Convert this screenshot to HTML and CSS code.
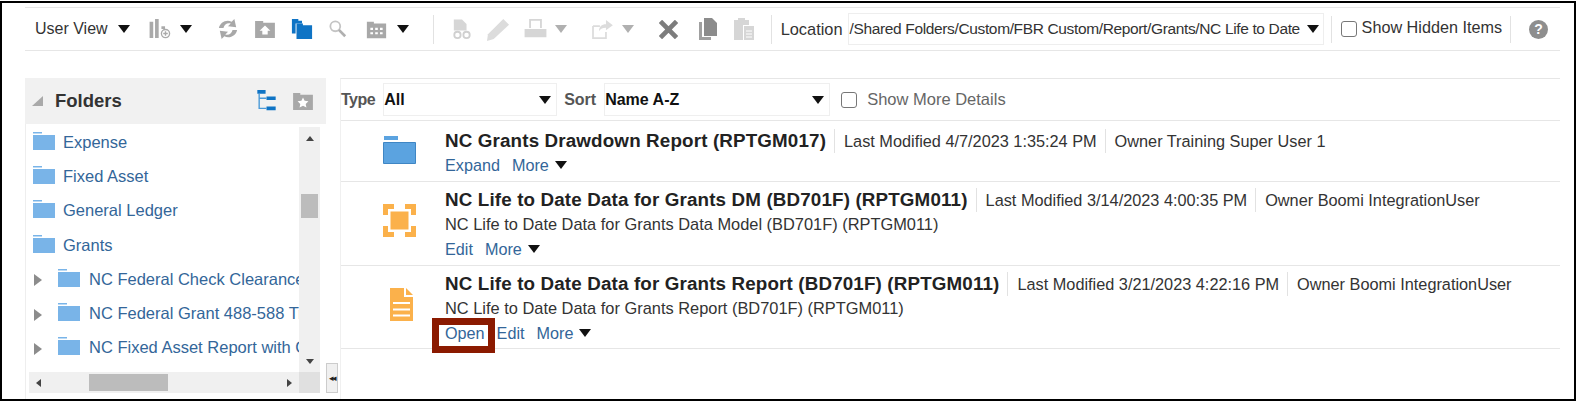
FILE: index.html
```html
<!DOCTYPE html>
<html lang="en">
<head>
<meta charset="utf-8">
<title>Catalog</title>
<link rel="stylesheet" href="styles.css">
</head>
<body>
<div class="frame">
  <div class="toolbar">
    <span class="tb-label">User View</span><span class="caret c-view"></span>
    <svg class="ic i-cols" viewBox="0 0 24 22"><path fill="#aaa" d="M0 3h4v18H0zM6 0h4v21H6z"/><path fill="#aaa" d="M13 8h4v3h-4z"/><circle cx="17.500" cy="16" r="4.500" fill="none" stroke="#aaa" stroke-width="1.500"/><path stroke="#aaa" stroke-width="1.500" d="M15 16h5M17.500 13.500v5"/></svg><span class="caret c-cols"></span>
    <svg class="ic i-refresh" viewBox="0 0 24 22"><path fill="#a8a8a8" d="M2 10C3 4 10 0 16 3l3-3 2 9-9-1 3-3c-4-1-7 1-8 5zM22 12c-1 6-8 10-14 7l-3 3-2-9 9 1-3 3c4 1 7-1 8-5z"/></svg>
    <svg class="ic i-up" viewBox="0 0 24 20"><path fill="#a8a8a8" d="M1 3V1h9v2h13v17H1z"/><path fill="#fff" d="M12 6l6 6h-3v4H9v-4H6z"/></svg>
    <svg class="ic i-folders" viewBox="0 0 24 22"><path fill="#0f74c5" d="M1 0h7v2h4v3H5v11H1z"/><path fill="#0f74c5" d="M6 5h7v2h10v15H6z"/></svg>
    <svg class="ic i-search" viewBox="0 0 20 20"><circle cx="7" cy="7" r="5.500" fill="none" stroke="#c4c4c4" stroke-width="2"/><path stroke="#b0b0b0" stroke-width="3" d="M11 11l7 7"/></svg>
    <svg class="ic i-grid" viewBox="0 0 24 20"><path fill="#a8a8a8" d="M1 3V1h8v2h14v17H1z"/><path fill="#fff" d="M5 8h3v2.500H5zM10.500 8h3v2.500h-3zM16 8h3v2.500h-3zM5 13h3v2.500H5zM10.500 13h3v2.500h-3zM16 13h3v2.500h-3z"/></svg><span class="caret c-grid"></span>
    <span class="sep s-one"></span>
    <svg class="ic i-doc" viewBox="0 0 22 22"><path fill="#d6d6d6" d="M2 0h9l5 5v7H2z"/><circle cx="6" cy="17" r="3.500" fill="none" stroke="#d0d0d0" stroke-width="2"/><circle cx="16" cy="17" r="3.500" fill="none" stroke="#d0d0d0" stroke-width="2"/></svg>
    <svg class="ic i-pen" viewBox="0 0 24 24"><path fill="#dcdcdc" d="M17 1l6 6L7 22l-7 2 1-7z"/></svg>
    <svg class="ic i-print" viewBox="0 0 24 22"><path fill="#d6d6d6" d="M5 0h14v10h-2V2H7v8H5zM0 11h24v9H0z"/></svg><span class="caret caret-off c-print"></span>
    <svg class="ic i-share" viewBox="0 0 24 22"><path fill="none" stroke="#dcdcdc" stroke-width="2" d="M1 7h8M1 7v14h15v-7"/><path fill="#dcdcdc" d="M16 0l8 6-8 6V9c-4 0-6 1-8 4 0-5 3-8 8-8z"/></svg><span class="caret caret-off c-share"></span>
    <svg class="ic i-x" viewBox="0 0 20 20"><path stroke="#7d7d7d" stroke-width="5" d="M1.500 1.500l17 17M18.500 1.500l-17 17"/></svg>
    <svg class="ic i-copy" viewBox="0 0 18 22"><path fill="#a0a0a0" d="M0 4h3v15h9v3H0z"/><path fill="#8c8c8c" d="M5 0h8l5 5v13H5z"/></svg>
    <svg class="ic i-paste" viewBox="0 0 20 22"><path fill="#d6d6d6" d="M0 2h4V0h7v2h4v5H9v15H0z"/><path fill="#d6d6d6" d="M10 8h10v14H10z"/><path stroke="#fff" d="M12 13h6M12 16h6M12 19h6"/></svg>
    <span class="sep s-two"></span>
    <span class="tb-label l-loc">Location</span>
    <div class="loc"><span class="loc-text">/Shared Folders/Custom/FBR Custom/Report/Grants/NC Life to Date</span><span class="caret c-loc"></span></div>
    <span class="sep s-three"></span>
    <span class="check c-hidden"></span><span class="tb-label l-hidden">Show Hidden Items</span>
    <span class="sep s-four"></span>
    <span class="help">?</span>
  </div>

  <div class="main">
    <aside class="side">
      <div class="side-head">
        <span class="tri-corner"></span>
        <span class="side-title">Folders</span>
        <svg class="ic i-tree" viewBox="0 0 20 24"><path fill="#0f74c5" d="M0 0h9v4H0zM10 7h10v4H10zM10 18h10v4H10z"/><path fill="none" stroke="#4a9ad8" stroke-width="1.500" d="M2 4v16h8M2 9h8"/></svg>
        <svg class="ic i-fav" viewBox="0 0 24 20"><path fill="#a8a8a8" d="M1 3V1h8v2h14v17H1z"/><path fill="#fff" d="M12 6l1.800 3.800 4.200.5-3 2.900.8 4.100-3.800-2-3.800 2 .8-4.100-3-2.900 4.200-.5z"/></svg>
      </div>
      <div class="tree-wrap">
        <div class="tree-view">
          <div class="tree">
            <div class="node"><svg class="fold" viewBox="0 0 22 18"><use href="#folder"/></svg><a>Expense</a></div>
            <div class="node"><svg class="fold" viewBox="0 0 22 18"><use href="#folder"/></svg><a>Fixed Asset</a></div>
            <div class="node"><svg class="fold" viewBox="0 0 22 18"><use href="#folder"/></svg><a>General Ledger</a></div>
            <div class="node"><svg class="fold" viewBox="0 0 22 18"><use href="#folder"/></svg><a>Grants</a></div>
            <div class="node sub"><span class="tri"></span><svg class="fold" viewBox="0 0 22 18"><use href="#folder"/></svg><a>NC Federal Check Clearance</a></div>
            <div class="node sub"><span class="tri"></span><svg class="fold" viewBox="0 0 22 18"><use href="#folder"/></svg><a>NC Federal Grant 488-588 Tr</a></div>
            <div class="node sub"><span class="tri"></span><svg class="fold" viewBox="0 0 22 18"><use href="#folder"/></svg><a>NC Fixed Asset Report with G</a></div>
            <div class="node sub"><span class="tri"></span><svg class="fold" viewBox="0 0 22 18"><use href="#folder"/></svg></div>
          </div>
          <div class="vbar"><span class="arr-up"></span><span class="vthumb"></span><span class="arr-down"></span></div>
        </div>
        <div class="hrow">
          <div class="hbar"><span class="arr-left"></span><span class="hthumb"></span><span class="arr-right"></span></div>
          <span class="corner"></span>
        </div>
      </div>
    </aside>
    <div class="splitter"><span class="grip">◂◂</span></div>
    <section class="content">
      <div class="filters">
        <span class="f-label l-type">Type</span>
        <div class="select s-type"><b>All</b><span class="caret"></span></div>
        <span class="f-label l-sort">Sort</span>
        <div class="select s-sort"><b>Name A-Z</b><span class="caret"></span></div>
        <span class="check c-more"></span><span class="more-label">Show More Details</span>
      </div>
      <div class="row r-one">
        <div class="r-icon"><svg class="big b-folder" viewBox="0 0 33 28"><path fill="#5ba3e0" d="M1 0h14v4H1z"/><path fill="#5ba3e0" stroke="#3f86c4" d="M.5 6.500h32v21H.5z"/></svg></div>
        <div class="r-body">
          <div class="r-top"><span class="r-title">NC Grants Drawdown Report (RPTGM017)</span><span class="meta first">Last Modified 4/7/2023 1:35:24 PM</span><span class="meta">Owner Training Super User 1</span></div>
          <div class="links"><a>Expand</a><a class="l-more">More</a><span class="caret"></span></div>
        </div>
      </div>
      <div class="row r-two">
        <div class="r-icon"><svg class="big" viewBox="0 0 33 33"><path fill="#fbb14b" d="M0 0h11v5H5v6H0zM22 0h11v11h-5V5h-6zM0 22h5v6h6v5H0zM28 22h5v11H22v-5h6z"/><path fill="#fbb14b" d="M7.500 7.500h18v18h-18z"/></svg></div>
        <div class="r-body">
          <div class="r-top"><span class="r-title">NC Life to Date Data for Grants DM (BD701F) (RPTGM011)</span><span class="meta first">Last Modified 3/14/2023 4:00:35 PM</span><span class="meta">Owner Boomi IntegrationUser</span></div>
          <div class="r-desc">NC Life to Date Data for Grants Data Model (BD701F) (RPTGM011)</div>
          <div class="links"><a>Edit</a><a class="l-more">More</a><span class="caret"></span></div>
        </div>
      </div>
      <div class="row r-three">
        <div class="r-icon"><svg class="doc" viewBox="0 0 23 33"><path fill="#fbb14b" d="M0 0h14v9h9v24H0z"/><path fill="#fbb14b" d="M16 0l7 7h-7z"/><path stroke="#fff" stroke-width="2.200" d="M3 15h17M3 21.500h17M3 27.500h17"/></svg></div>
        <div class="r-body">
          <div class="r-top"><span class="r-title">NC Life to Date Data for Grants Report (BD701F) (RPTGM011)</span><span class="meta first">Last Modified 3/21/2023 4:22:16 PM</span><span class="meta">Owner Boomi IntegrationUser</span></div>
          <div class="r-desc">NC Life to Date Data for Grants Report (BD701F) (RPTGM011)</div>
          <div class="links"><a class="open">Open<span class="mark"></span></a><a class="l-edit">Edit</a><a class="l-more">More</a><span class="caret"></span></div>
        </div>
      </div>
    </section>
  </div>
</div>
<svg class="defs" width="0" height="0"><defs><g id="folder"><path fill="#79b4e8" d="M0 0h9v1.500H0z"/><path fill="#79b4e8" d="M0 3h22v15H0z"/></g></defs></svg>
</body>
</html>
```
FILE: styles.css
```css
* { box-sizing: border-box; }
html, body { margin: 0; padding: 0; background: #fff; }
body { width: 1578px; height: 403px; overflow: hidden; font-family: "Liberation Sans", Arial, sans-serif; color: #333; }
.defs { display: block; height: 0; }
.frame { width: 1576px; height: 400px; margin-top: 1px; border: 2px solid #000; padding: 4px 14px 0 23px; overflow: hidden; }
.ic { display: block; flex: none; }

.toolbar { display: flex; align-items: center; height: 44px; border-top: 1px solid #e6e6e6; border-bottom: 1px solid #e6e6e6; padding-left: 10px; }
.tb-label { font-size: 16px; color: #333; white-space: nowrap; }
.caret { display: inline-block; flex: none; width: 0; height: 0; border-left: 6px solid transparent; border-right: 6px solid transparent; border-top: 8px solid #111; }
.caret-off { border-top-color: #b0b0b0; }
.c-view { margin-left: 10px; }
.i-cols { width: 23px; height: 20px; margin-left: 19px; }
.c-cols { margin-left: 8px; }
.i-refresh { width: 22px; height: 20px; margin-left: 25px; }
.i-up { width: 22px; height: 18px; margin-left: 15px; }
.i-folders { width: 22px; height: 22px; margin-left: 15px; }
.i-search { width: 18px; height: 18px; margin-left: 16px; }
.i-grid { width: 21px; height: 19px; margin-left: 19px; }
.c-grid { margin-left: 10px; }
.sep { display: block; flex: none; width: 1px; height: 29px; background: #e2e2e2; }
.s-one { margin-left: 24px; }
.i-doc { width: 20px; height: 21px; margin-left: 18px; }
.i-pen { width: 23px; height: 23px; margin-left: 15px; }
.i-print { width: 23px; height: 20px; margin-left: 14px; }
.c-print { margin-left: 8px; }
.i-share { width: 21px; height: 19px; margin-left: 25px; }
.c-share { margin-left: 9px; }
.i-x { width: 19px; height: 19px; margin-left: 25px; }
.i-copy { width: 18px; height: 22px; margin-left: 21px; }
.i-paste { width: 20px; height: 22px; margin-left: 17px; }
.s-two { margin-left: 17px; }
.l-loc { margin-left: 9px; font-size: 16.400px; }
.loc { display: flex; align-items: center; justify-content: space-between; width: 476px; height: 32px; margin-left: 5px; padding: 0 4px 0 1px; border: 1px solid #eee; }
.loc-text { font-size: 15.500px; color: #333; white-space: nowrap; letter-spacing: -.36px; }
.s-three { margin-left: 7px; height: 27px; }
.check { display: block; flex: none; width: 16px; height: 16px; border: 1.500px solid #777; border-radius: 3px; background: #fff; }
.c-hidden { margin-left: 9px; }
.l-hidden { margin-left: 5px; font-size: 16.200px; position: relative; top: -2px; }
.s-four { margin-left: 8px; height: 27px; }
.help { display: flex; align-items: center; justify-content: center; flex: none; width: 19px; height: 19px; margin-left: 18px; border-radius: 50%; background: #8e8e8e; color: #fff; font-size: 14px; font-weight: bold; }

.main { display: flex; margin-top: 27px; height: 322px; }
.side { width: 301px; flex: none; }
.side-head { display: flex; align-items: center; height: 46px; background: #f1f1f1; }
.tri-corner { width: 0; height: 0; margin-left: 7px; border-bottom: 10px solid #a9a9a9; border-left: 11px solid transparent; }
.side-title { margin-left: 12px; font-size: 18.500px; font-weight: bold; color: #333; }
.i-tree { width: 19px; height: 22px; margin-left: 135px; }
.i-fav { width: 22px; height: 18px; margin-left: 16px; }
.tree-wrap { height: 276px; padding: 3px 6px 0 3px; border-left: 1px solid #eee; }
.tree-view { display: flex; height: 245px; }
.tree { width: 270px; flex: none; overflow: hidden; padding-left: 4px; }
.node { display: flex; align-items: center; height: 34.300px; white-space: nowrap; }
.node:first-child { margin-top: -2px; }
.node a { font-size: 16.500px; color: #336699; margin-left: 8px; }
.fold { display: block; flex: none; width: 22px; height: 18px; margin-bottom: 3px; }
.sub .tri { flex: none; width: 0; height: 0; margin: 2px 0 0 1px; border-left: 8px solid #8c8c8c; border-top: 6.500px solid transparent; border-bottom: 6.500px solid transparent; }
.sub .fold { margin-left: 16px; }
.sub a { margin-left: 9px; }
.vbar { position: relative; width: 21px; flex: none; background: #f0f0f0; display: flex; flex-direction: column; align-items: center; justify-content: space-between; padding: 9px 0 8px; }
.vthumb { position: absolute; top: 67px; left: 2px; width: 17px; height: 24px; background: #bcbcbc; }
.arr-up { width: 0; height: 0; border-left: 4.500px solid transparent; border-right: 4.500px solid transparent; border-bottom: 5px solid #444; }
.arr-down { width: 0; height: 0; border-left: 4.500px solid transparent; border-right: 4.500px solid transparent; border-top: 5px solid #444; }
.hrow { display: flex; height: 21px; }
.hbar { position: relative; flex: 1; background: #f0f0f0; display: flex; align-items: center; justify-content: space-between; padding: 0 7px; }
.hthumb { position: absolute; left: 60px; top: 2px; width: 79px; height: 17px; background: #bcbcbc; }
.arr-left { width: 0; height: 0; border-top: 4.500px solid transparent; border-bottom: 4.500px solid transparent; border-right: 5px solid #444; }
.arr-right { width: 0; height: 0; border-top: 4.500px solid transparent; border-bottom: 4.500px solid transparent; border-left: 5px solid #444; }
.corner { width: 21px; background: #e0e0e0; }

.splitter { position: relative; width: 14px; flex: none; }
.grip { position: absolute; left: 0; top: 285px; width: 12px; height: 30px; display: flex; align-items: center; justify-content: center; background: #f0f0f0; border: 1px solid #ccc; color: #222; font-size: 9px; letter-spacing: -1.500px; overflow: hidden; }

.content { flex: 1; min-width: 0; border-top: 1px solid #e6e6e6; border-left: 1px solid #f0f0f0; }
.filters { display: flex; align-items: center; height: 42px; border-bottom: 1px solid #e6e6e6; }
.f-label { font-size: 16px; font-weight: bold; color: #555; }
.l-type { letter-spacing: -.5px; }
.select { display: flex; align-items: center; justify-content: space-between; height: 33px; padding: 0 5px 0 0; border: 1px solid #efefef; color: #111; }
.select b { font-size: 16px; }
.s-type { width: 174px; margin-left: 8px; }
.l-sort { margin-left: 7px; }
.s-sort { width: 226px; margin-left: 8px; }
.c-more { margin-left: 11px; }
.more-label { margin-left: 10px; font-size: 16.500px; color: #666; }

.row { display: flex; border-bottom: 1px solid #e6e6e6; }
.r-one { height: 61px; }
.r-two { height: 84px; }
.r-three { height: 83px; }
.r-icon { width: 104px; flex: none; display: flex; padding-left: 42px; }
.r-one .r-icon { padding-top: 15px; }
.r-two .r-icon { padding-top: 22px; }
.r-three .r-icon { padding-top: 22px; padding-left: 49px; }
.big { display: block; width: 33px; height: 33px; }
.b-folder { height: 28px; }
.doc { display: block; width: 23px; height: 33px; }
.r-body { flex: 1; min-width: 0; padding-top: 6px; }
.r-one .r-body { padding-top: 7px; }
.r-two .r-body { padding-top: 5px; }
.r-top { display: flex; align-items: center; height: 24px; white-space: nowrap; }
.r-one .r-top, .r-two .r-top { height: 25px; }
.r-title { font-size: 18.800px; font-weight: bold; color: #222; letter-spacing: .15px; }
.meta { font-size: 16.300px; color: #333; padding-left: 9px; margin-left: 8px; border-left: 1px solid #e2e2e2; line-height: 24px; }
.r-desc { font-size: 16.400px; color: #333; height: 25px; line-height: 25px; white-space: nowrap; }
.links { display: flex; align-items: center; height: 24px; font-size: 16.200px; }
.links a { color: #336699; }
.l-more { margin-left: 12px; }
.links .caret { margin-left: 6px; }
.l-edit { margin-left: 12px; }
.open { position: relative; }
.mark { position: absolute; left: -13px; top: -6px; width: 63px; height: 35px; border: 7px solid #8b1a00; }
```
